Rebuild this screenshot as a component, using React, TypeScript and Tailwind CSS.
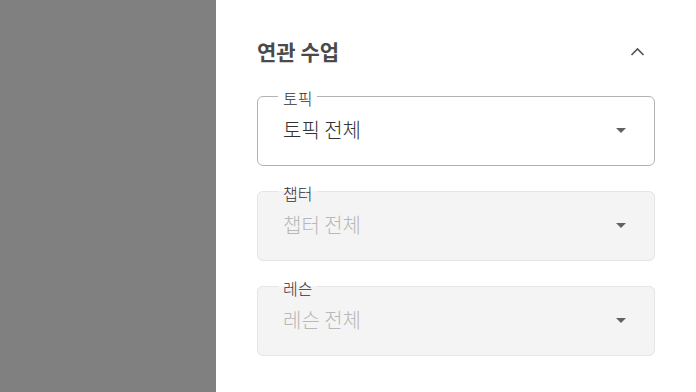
import React from "react";

const font = { fontFamily: '"Noto Sans CJK KR", "Noto Sans", sans-serif' };

function Caret() {
  return (
    <svg width="10" height="5" viewBox="0 0 10 5" className="shrink-0">
      <path d="M0 0 L10 0 L5 5 Z" fill="#616161" />
    </svg>
  );
}

function Field({ label, value, disabled }: { label: string; value: string; disabled?: boolean }) {
  return (
    <fieldset
      className={
        "m-0 h-[78px] rounded-[6px] border px-0 pb-0 pt-0 " +
        (disabled ? "border-[#e5e5e5] bg-[#f4f4f4]" : "border-[#b3b3b3] bg-white")
      }
    >
      <legend className="relative top-[2px] ml-[20px] px-[5px] text-[16px] font-light leading-[16px] text-[#333333]">
        {label}
      </legend>
      <div className="flex h-[52px] items-center pl-[25px] pr-[28px]">
        <span
          className={
            "flex-1 text-[20px] font-light leading-[24px] " + (disabled ? "text-[#b8b8b8]" : "text-[#333333]")
          }
        >
          {value}
        </span>
        <Caret />
      </div>
    </fieldset>
  );
}

export default function App() {
  return (
    <div className="flex h-[392px] w-[696px] overflow-hidden" style={font}>
      <div className="w-[216px] shrink-0 bg-[#808080]" />
      <div className="flex flex-1 flex-col bg-white px-[41px] pt-[38px]">
        <div className="flex items-center justify-between">
          <h2 className="text-[21px] font-bold leading-[26px] text-[#4a4a4a]">연관 수업</h2>
          <svg width="15" height="10" viewBox="0 0 15 10" className="mr-[10px] mt-[2px]">
            <path d="M1.5 8 L7.5 2 L13.5 8" fill="none" stroke="#555555" strokeWidth="1.7" />
          </svg>
        </div>
        <div className="mt-[24px] flex flex-col gap-[17px]">
          <Field label="토픽" value="토픽 전체" />
          <Field label="챕터" value="챕터 전체" disabled />
          <Field label="레슨" value="레슨 전체" disabled />
        </div>
      </div>
    </div>
  );
}
